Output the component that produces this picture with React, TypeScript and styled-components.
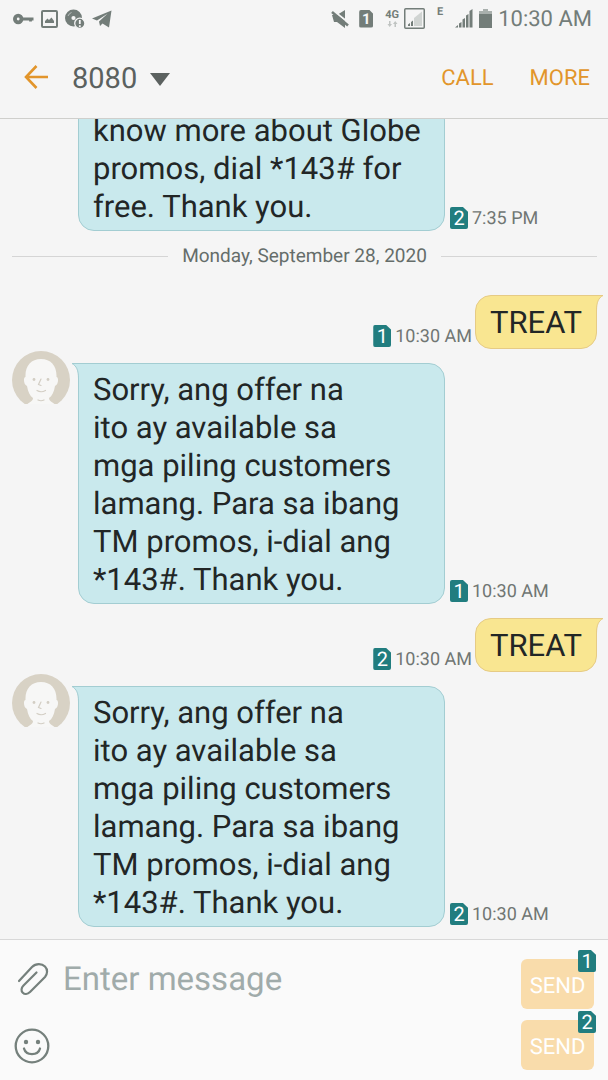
import React from "react";
import styled, { createGlobalStyle, css } from "styled-components";

const GlobalStyle = createGlobalStyle`
  * { box-sizing: border-box; }
  body {
    margin: 0;
    background: #f5f5f5;
    font-family: Roboto, "Liberation Sans", sans-serif;
    text-rendering: geometricPrecision;
  }
  button, input { font: inherit; text-rendering: inherit; }
  svg { display: block; flex: none; }
`;

const resetButton = css`
  border: 0;
  padding: 0;
  margin: 0;
  background: none;
  cursor: pointer;
`;

const Screen = styled.div`
  display: flex;
  flex-direction: column;
  height: 100vh;
  overflow: hidden;
  background: #f5f5f5;
`;

/* ---------- status bar ---------- */

const StatusBar = styled.div`
  display: flex;
  justify-content: space-between;
  align-items: center;
  height: 36px;
  padding: 1px 16px 0 13px;
  color: #737d79;
`;

const StatusGroup = styled.div<{ $gap: number }>`
  display: flex;
  align-items: center;
  gap: ${(p) => p.$gap}px;
`;

const NetworkLabel = styled.span`
  display: flex;
  flex-direction: column;
  align-items: center;
  align-self: flex-start;
  font-size: 11px;
  line-height: 13px;
  font-weight: 700;
`;

const Clock = styled.time`
  padding-top: 2px;
  font-size: 22px;
  line-height: 26px;
`;

/* ---------- header ---------- */

const Header = styled.header`
  display: flex;
  align-items: center;
  flex: none;
  height: 83px;
  padding: 0 18px 0 24px;
  border-bottom: 1px solid #cfcfcc;
`;

const IconButton = styled.button`
  ${resetButton}
  color: inherit;
`;

const Contact = styled.button`
  ${resetButton}
  display: flex;
  align-items: center;
  gap: 13px;
  margin: 0 auto 0 23px;
  padding-top: 4px;
  font-size: 29px;
  line-height: 36px;
  color: #5b615f;
`;

const HeaderActions = styled.div`
  display: flex;
  gap: 36px;
  padding-top: 4px;
`;

const TextAction = styled.button`
  ${resetButton}
  font-size: 22px;
  line-height: 26px;
  color: #e2952b;
`;

/* ---------- thread ---------- */

const Thread = styled.main`
  display: flex;
  flex-direction: column;
  justify-content: flex-end;
  flex: 1;
  min-height: 0;
  gap: 14px;
  padding: 0 11px 12px 12px;
  overflow: hidden;
`;

const Row = styled.article<{ $sent?: boolean }>`
  display: flex;
  flex: none;
  justify-content: ${(p) => (p.$sent ? "flex-end" : "flex-start")};
  align-items: flex-end;
`;

const AvatarSlot = styled.div`
  flex: none;
  align-self: flex-start;
  width: 58px;
  margin: -12px 8px 0 0;
`;

const Bubble = styled.div<{ $sent?: boolean }>`
  position: relative;
  flex: ${(p) => (p.$sent ? "none" : "0 1 367px")};
  padding: ${(p) => (p.$sent ? "8px 14px 6px" : "7px 14px 4px")};
  border: 1px solid ${(p) => (p.$sent ? "#e6cb85" : "#a3cdd2")};
  border-radius: ${(p) => (p.$sent ? "16px 0 16px 16px" : "0 16px 16px 16px")};
  background: ${(p) => (p.$sent ? "#f9e691" : "#c9e9ed")};
  color: #222626;
  font-size: 31px;
  line-height: 38px;
  white-space: pre;
`;

const TailShape = styled.svg<{ $sent?: boolean }>`
  position: absolute;
  top: -1px;
  ${(p) => (p.$sent ? "right: -8px; transform: scaleX(-1);" : "left: -8px;")}
`;

const Meta = styled.div<{ $sent?: boolean }>`
  display: flex;
  align-items: center;
  gap: 4px;
  flex: none;
  margin: ${(p) => (p.$sent ? "0 3px 1px 0" : "0 0 1px 5px")};
  font-size: 18px;
  line-height: 22px;
  color: #707673;

  time {
    padding-top: 2px;
  }
`;

const DateDivider = styled.div`
  display: flex;
  align-items: center;
  flex: none;
  gap: 14px;
  margin-bottom: 14px;
  font-size: 19px;
  line-height: 22px;
  color: #656d6a;

  &::before,
  &::after {
    content: "";
    flex: 1;
    height: 1px;
    background: #d5d5d5;
  }
`;

const SimTag = styled.span`
  display: block;
  flex: none;
  width: 18px;
  height: 22px;
  border-radius: 2px;
  background: #217d7f;
  clip-path: polygon(0 0, 72% 0, 100% 22%, 100% 100%, 0 100%);
  color: #fff;
  font-size: 20px;
  line-height: 23px;
  text-align: center;
`;

/* ---------- composer ---------- */

const Composer = styled.form`
  display: flex;
  justify-content: space-between;
  flex: none;
  padding: 19px 14px 10px;
  border-top: 1px solid #d8d8d8;
  background: #fafafa;
`;

const Entry = styled.div`
  display: flex;
  flex-direction: column;
  justify-content: space-between;
  flex: 1;
  min-width: 0;
  padding: 1px 0 6px;
  color: #75807c;
`;

const EntryLine = styled.div`
  display: flex;
  align-items: center;
  gap: 14px;
`;

const MessageInput = styled.input`
  flex: 1;
  min-width: 0;
  height: 38px;
  padding: 0;
  border: 0;
  outline: 0;
  background: none;
  color: #222626;
  font-size: 33px;

  &::placeholder {
    color: #a0abaa;
    opacity: 1;
  }
`;

const SendColumn = styled.div`
  display: flex;
  flex-direction: column;
  gap: 11px;
`;

const SendButton = styled.button`
  ${resetButton}
  position: relative;
  width: 73px;
  height: 50px;
  padding-top: 5px;
  border-radius: 6px;
  background: #f9dcab;
  color: #fff;
  font-size: 22px;
  line-height: 26px;
`;

const SendTag = styled.span`
  position: absolute;
  top: -9px;
  right: -2px;
`;

/* ---------- drawings ---------- */

const Tail = ({ sent }: { sent?: boolean }) => (
  <TailShape $sent={sent} width="16" height="16" viewBox="0 0 16 16" aria-hidden="true">
    <path d="M1 .5H16V16H7.5C7.5 7 5.500 3 1 .5Z" fill={sent ? "#f9e691" : "#c9e9ed"} />
    <path
      d="M16 .5H1C5.500 3 7.500 7 7.500 16"
      fill="none"
      stroke={sent ? "#e6cb85" : "#a3cdd2"}
    />
  </TailShape>
);

const Avatar = () => (
  <svg width="58" height="58" viewBox="0 0 58 58" role="img" aria-label="Contact photo">
    <circle cx="29" cy="29" r="29" fill="#d8d2c5" />
    <path
      d="M29 8C19 8 13 15 13.500 26C11 26 11.500 34 15 35C16 41 18 45 21 47C21 50 18 51 14 54V59H44V54C40 51 37 50 37 47C40 45 42 41 43 35C46.500 34 47 26 44.500 26C45 15 39 8 29 8Z"
      fill="#f7f7f6"
    />
    <path d="M0 53H58V58H0Z" fill="#f5f5f5" />
    <g fill="none" stroke="#d3cec4" strokeWidth="1.200" strokeLinecap="round">
      <path d="M29 28L26.500 33.500L29 34.500M25 39.500Q29 42 33.500 39.500M26 49Q29 50.500 32 49" />
    </g>
    <g fill="#d3cec4">
      <circle cx="22" cy="28.500" r="1.400" />
      <circle cx="36" cy="28.500" r="1.400" />
    </g>
  </svg>
);

const KeyIcon = () => (
  <svg width="21" height="18" viewBox="0 0 21 18" fill="none" stroke="currentColor">
    <circle cx="5.200" cy="9" r="3.300" strokeWidth="3.800" />
    <path d="M9 9H20.500M17.500 9V11.500" strokeWidth="2.800" />
  </svg>
);

const ImageIcon = () => (
  <svg width="17" height="18" viewBox="0 0 17 18">
    <rect x="1" y="1" width="15" height="16" rx="1" fill="none" stroke="currentColor" strokeWidth="2" />
    <path d="M4 13V11L6.500 8.500L8 10L10.500 7.500L13 11V13Z" fill="currentColor" />
  </svg>
);

const DiscAlertIcon = () => (
  <svg width="20" height="20" viewBox="0 0 20 20">
    <circle cx="8.500" cy="9" r="5.300" fill="none" stroke="currentColor" strokeWidth="6.400" />
    <path d="M3 7A6 6 0 0 1 6.500 3.500" stroke="#b9bfbd" fill="none" />
    <circle cx="14.800" cy="14.300" r="5.100" fill="currentColor" stroke="#f5f5f5" strokeWidth="1.300" />
    <path d="M14.800 11V15M14.800 16.300V18" stroke="#f5f5f5" strokeWidth="1.800" />
  </svg>
);

const PlaneIcon = () => (
  <svg width="20" height="18" viewBox="0 0 20 18" fill="currentColor">
    <path d="M0 8.500L19.500 .5L17 17.500L10.500 13.500L8 16L7 11.500L15.500 3.800L5 10.500Z" />
  </svg>
);

const MuteIcon = () => (
  <svg width="18" height="20" viewBox="0 0 18 20">
    <path d="M1 6H6L14 1V19L6 13H3Z" fill="currentColor" />
    <path d="M0 0L18 14" stroke="#f5f5f5" strokeWidth="2" />
    <path d="M1 3L17 16.500" stroke="currentColor" strokeWidth="2.600" />
  </svg>
);

const StatusSim = styled.span`
  width: 14px;
  height: 18px;
  border-radius: 2px;
  background: #737d79;
  clip-path: polygon(0 0, 70% 0, 100% 24%, 100% 100%, 0 100%);
  color: #f5f5f5;
  font-size: 15px;
  line-height: 18px;
  font-weight: 700;
  text-align: center;
`;

const DataArrows = () => (
  <svg width="11" height="6" viewBox="0 0 11 6" fill="#c0c4c2">
    <path d="M2 0H3.500V3H5L2.700 6L.5 3H2ZM7.500 6H9V3H10.500L8.200 0L6 3H7.500Z" />
  </svg>
);

const BoxedSignal = () => (
  <svg width="21" height="21" viewBox="0 0 21 21">
    <rect x=".75" y=".75" width="19.500" height="19.500" rx="1" fill="none" stroke="currentColor" strokeWidth="1.500" />
    <path d="M10 18V10L18 3.500V18Z" fill="#d0d4d2" />
    <path d="M4 18V16.500L6 15V18ZM7 18V14L9 12.500V18Z" fill="currentColor" />
  </svg>
);

const Signal = () => (
  <svg width="18" height="19" viewBox="0 0 18 19" fill="currentColor">
    <path d="M0 18.500L3 16V18.500ZM4 18.500V14.500L6.500 13V18.500ZM7.500 18.500V10.500L10 9V18.500ZM11 18.500V6.500L13.500 5V18.500ZM14.500 18.500V2L17.500 0V18.500Z" />
  </svg>
);

const Battery = () => (
  <svg width="13" height="20" viewBox="0 0 13 20">
    <path d="M4 0H9V2H13V6H0V2H4Z" fill="#a9b0ad" />
    <path d="M0 5H13V19H0Z" fill="currentColor" />
  </svg>
);

const BackArrow = () => (
  <svg width="25" height="26" viewBox="0 0 25 26" fill="none" stroke="#e2952b" strokeWidth="2.600">
    <path d="M12.500 2L2 13L12.500 24M2 13H24" />
  </svg>
);

const PaperclipIcon = () => (
  <svg width="35" height="36" viewBox="0 0 35 36" fill="none" stroke="currentColor" strokeWidth="2.200" strokeLinecap="round" strokeLinejoin="round">
    <path d="M5 20L18 6C22 2 28 2.500 31 5.500C34 8.500 33.500 13 31 16L16 31C13.500 33.500 10.500 33.500 8.800 31.800C7 30 7 27 9.500 24.500L22.500 11.500" />
  </svg>
);

const SmileIcon = () => (
  <svg width="36" height="36" viewBox="0 0 36 36" fill="none" stroke="currentColor" strokeWidth="2.300">
    <circle cx="18" cy="18" r="16.300" />
    <path d="M10 20.500C12 28 24 28 26 20.500" strokeLinecap="round" />
    <circle cx="12" cy="14" r="2.200" fill="currentColor" stroke="none" />
    <circle cx="24" cy="14" r="2.200" fill="currentColor" stroke="none" />
  </svg>
);

/* ---------- messages ---------- */

interface MessageProps {
  text: string;
  time: string;
  sim: number;
  avatar?: boolean;
}

const Received = ({ text, time, sim, avatar }: MessageProps) => (
  <Row>
    <AvatarSlot>{avatar && <Avatar />}</AvatarSlot>
    <Bubble>
      {avatar && <Tail />}
      {text}
    </Bubble>
    <Meta>
      <SimTag>{sim}</SimTag>
      <time>{time}</time>
    </Meta>
  </Row>
);

const Sent = ({ text, time, sim }: MessageProps) => (
  <Row $sent>
    <Meta $sent>
      <SimTag>{sim}</SimTag>
      <time>{time}</time>
    </Meta>
    <Bubble $sent>
      <Tail sent />
      {text}
    </Bubble>
  </Row>
);

const REPLY =
  "Sorry, ang offer na\nito ay available sa\nmga piling customers\nlamang. Para sa ibang\nTM promos, i-dial ang\n*143#. Thank you.";

export default function App() {
  return (
    <Screen>
      <GlobalStyle />
      <StatusBar>
        <StatusGroup $gap={7}>
          <KeyIcon />
          <ImageIcon />
          <DiscAlertIcon />
          <PlaneIcon />
        </StatusGroup>
        <StatusGroup $gap={12}>
          <StatusGroup $gap={10}>
            <MuteIcon />
            <StatusSim>1</StatusSim>
          </StatusGroup>
          <StatusGroup $gap={5}>
            <NetworkLabel>
              4G
              <DataArrows />
            </NetworkLabel>
            <BoxedSignal />
          </StatusGroup>
          <NetworkLabel>E</NetworkLabel>
          <StatusGroup $gap={6}>
            <Signal />
            <Battery />
            <Clock>10:30 AM</Clock>
          </StatusGroup>
        </StatusGroup>
      </StatusBar>

      <Header>
        <IconButton type="button" aria-label="Back">
          <BackArrow />
        </IconButton>
        <Contact type="button">
          8080
          <svg width="20" height="13" viewBox="0 0 20 13" fill="currentColor" aria-hidden="true">
            <path d="M0 0H20L10 13Z" />
          </svg>
        </Contact>
        <HeaderActions>
          <TextAction type="button">CALL</TextAction>
          <TextAction type="button">MORE</TextAction>
        </HeaderActions>
      </Header>

      <Thread>
        <Received
          text={"know more about Globe\npromos, dial *143# for\nfree. Thank you."}
          time="7:35 PM"
          sim={2}
        />
        <DateDivider>Monday, September 28, 2020</DateDivider>
        <Sent text="TREAT" time="10:30 AM" sim={1} />
        <Received avatar text={REPLY} time="10:30 AM" sim={1} />
        <Sent text="TREAT" time="10:30 AM" sim={2} />
        <Received avatar text={REPLY} time="10:30 AM" sim={2} />
      </Thread>

      <Composer onSubmit={(e) => e.preventDefault()}>
        <Entry>
          <EntryLine>
            <IconButton type="button" aria-label="Attach">
              <PaperclipIcon />
            </IconButton>
            <MessageInput aria-label="Message" placeholder="Enter message" />
          </EntryLine>
          <EntryLine>
            <IconButton type="button" aria-label="Emoji">
              <SmileIcon />
            </IconButton>
          </EntryLine>
        </Entry>
        <SendColumn>
          {[1, 2].map((sim) => (
            <SendButton key={sim} type="submit">
              SEND
              <SendTag>
                <SimTag>{sim}</SimTag>
              </SendTag>
            </SendButton>
          ))}
        </SendColumn>
      </Composer>
    </Screen>
  );
}
